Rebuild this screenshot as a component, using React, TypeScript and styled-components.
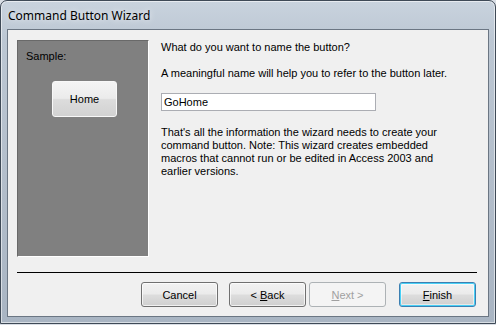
import styled, { createGlobalStyle, css } from "styled-components";

const GlobalStyle = createGlobalStyle`
  html, body {
    margin: 0;
    padding: 0;
    background: #d9dee5;
  }
  body {
    font-family: "Liberation Sans", Arial, sans-serif;
    font-size: 11px;
    color: #000;
  }
`;

const Window = styled.div`
  box-sizing: border-box;
  width: 496px;
  height: 324px;
  display: flex;
  flex-direction: column;
  border: 1px solid #3f4a57;
  border-radius: 7px 7px 0 0;
  background: linear-gradient(180deg, #c9d3de 0%, #bcc7d3 12%, #b2bdca 60%, #a9b5c3 100%);
  box-shadow: inset 0 0 0 1px rgba(255, 255, 255, 0.55);
`;

const TitleBar = styled.div`
  height: 28px;
  padding-left: 7px;
  display: flex;
  align-items: center;
  font-family: "Noto Sans", "Open Sans", sans-serif;
  font-size: 12px;
  color: #000;
  text-shadow: 0 0 6px rgba(255, 255, 255, 0.9);
`;

const Client = styled.div`
  flex: 1;
  margin: 0 6px 6px 6px;
  border: 1px solid #6b7683;
  background: #f0f0f0;
  display: flex;
  flex-direction: column;
`;

const Body = styled.div`
  display: flex;
  gap: 12px;
  padding: 10px 11px 0 9px;
`;

const SamplePanel = styled.div`
  box-sizing: border-box;
  width: 132px;
  height: 217px;
  padding: 9px 0 0 8px;
  background: #808080;
  border-style: solid;
  border-width: 1px;
  border-color: #696969 #ffffff #ffffff #696969;
  display: flex;
  flex-direction: column;
`;

const SampleLabel = styled.div`
  line-height: 13px;
`;

const SampleButton = styled.div`
  box-sizing: border-box;
  width: 65px;
  height: 36px;
  margin: 18px 0 0 26px;
  border: 1px solid #f8f8f8;
  border-radius: 3px;
  background: linear-gradient(180deg, #f4f4f4 0%, #ebebeb 48%, #dcdcdc 52%, #d2d2d2 100%);
  display: flex;
  align-items: center;
  justify-content: center;
  color: #000;
`;

const Content = styled.div`
  width: 290px;
  padding-top: 1px;
  display: flex;
  flex-direction: column;
`;

const Text = styled.p<{ $gap?: number }>`
  margin: ${(p) => p.$gap ?? 0}px 0 0 0;
  line-height: 13px;
`;

const NameInput = styled.input`
  box-sizing: border-box;
  width: 215px;
  height: 18px;
  margin-top: 13px;
  padding: 0 2px;
  border: 1px solid #abadb3;
  background: #fff;
  font-family: inherit;
  font-size: 11px;
  color: #000;
  outline: none;
`;

const Separator = styled.div`
  height: 1px;
  margin: 15px 11px 0 9px;
  background: #000;
`;

const Footer = styled.div`
  display: flex;
  justify-content: flex-end;
  padding: 9px 12px 0 0;
`;

const Button = styled.div<{ $variant?: "default" | "disabled"; $gap?: number }>`
  box-sizing: border-box;
  width: 77px;
  height: 25px;
  margin-left: ${(p) => p.$gap ?? 0}px;
  border: 1px solid #707070;
  border-radius: 3px;
  background: linear-gradient(180deg, #f2f2f2 0%, #ebebeb 48%, #dddddd 52%, #cfcfcf 100%);
  box-shadow: inset 0 0 0 1px rgba(255, 255, 255, 0.7);
  display: flex;
  align-items: center;
  justify-content: center;
  white-space: pre;
  color: #000;
  ${(p) =>
    p.$variant === "default" &&
    css`
      border-color: #3c7fb1;
      box-shadow: inset 0 0 0 1px #48d0f6, inset 0 0 0 2px rgba(255, 255, 255, 0.5);
    `}
  ${(p) =>
    p.$variant === "disabled" &&
    css`
      border-color: #adb2b5;
      background: #f4f4f4;
      box-shadow: none;
      color: #a0a0a0;
    `}
`;

const Key = styled.span`
  text-decoration: underline;
  text-underline-offset: 1px;
`;

export default function App() {
  return (
    <>
      <GlobalStyle />
      <Window>
        <TitleBar>Command Button Wizard</TitleBar>
        <Client>
          <Body>
            <SamplePanel>
              <SampleLabel>Sample:</SampleLabel>
              <SampleButton>Home</SampleButton>
            </SamplePanel>
            <Content>
              <Text>What do you want to name the button?</Text>
              <Text $gap={13}>A meaningful name will help you to refer to the button later.</Text>
              <NameInput defaultValue="GoHome" />
              <Text $gap={15}>
                That's all the information the wizard needs to create your command button.
                Note: This wizard creates embedded macros that cannot run or be edited in
                Access 2003 and earlier versions.
              </Text>
            </Content>
          </Body>
          <Separator />
          <Footer>
            <Button>Cancel</Button>
            <Button $gap={11}>
              {"< "}
              <Key>B</Key>ack
            </Button>
            <Button $variant="disabled" $gap={3}>
              <Key>N</Key>
              {"ext >"}
            </Button>
            <Button $variant="default" $gap={13}>
              <Key>F</Key>inish
            </Button>
          </Footer>
        </Client>
      </Window>
    </>
  );
}
